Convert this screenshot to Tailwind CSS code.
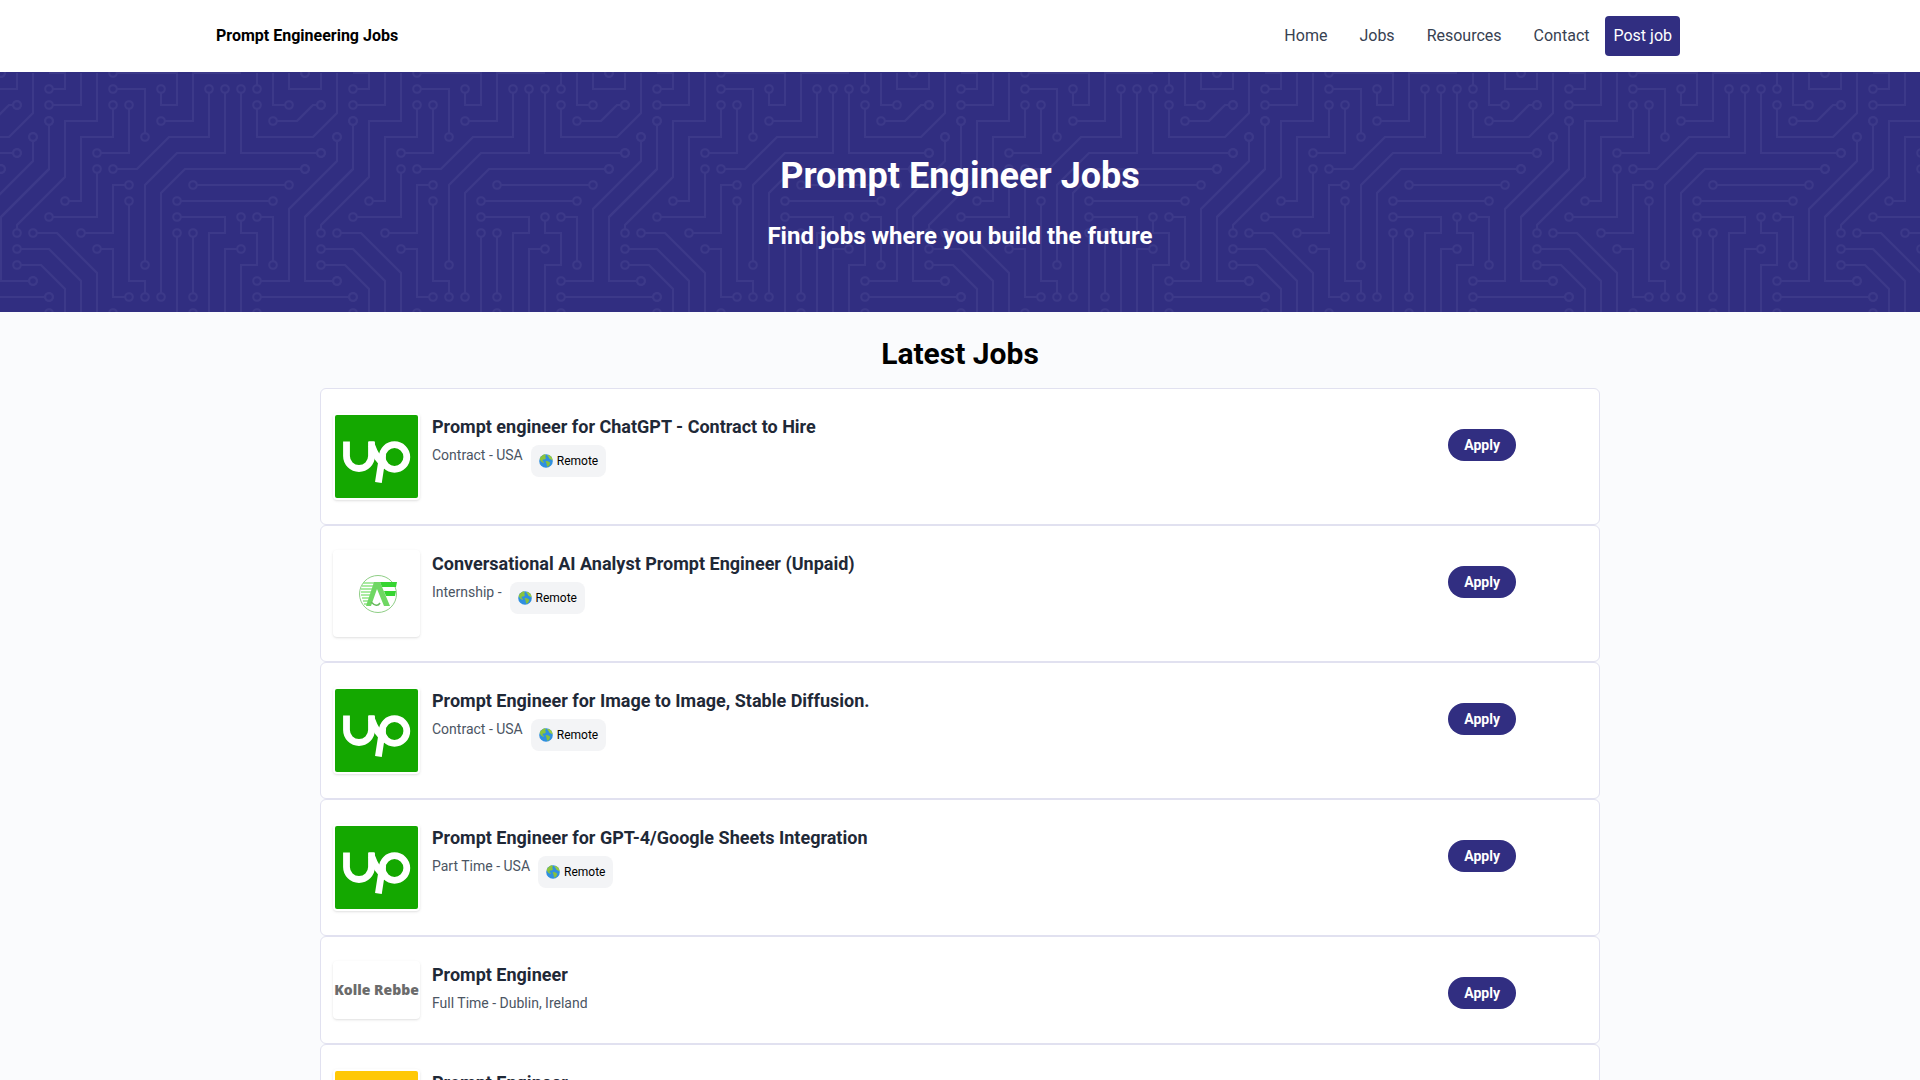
<!DOCTYPE html>
<html lang="en">
<head>
<meta charset="utf-8">
<meta name="viewport" content="width=device-width, initial-scale=1">
<title>Prompt Engineering Jobs</title>
<script src="https://cdn.jsdelivr.net/npm/@tailwindcss/browser@4"></script>
</head>
<body class="bg-[#fafbfd] font-[Roboto,sans-serif] text-black">

<!-- Shared artwork -->
<svg class="absolute size-0" aria-hidden="true">
  <defs>
    <symbol id="globe" viewBox="0 0 14 14">
      <circle cx="7" cy="7" r="6.8" fill="#2f8fe0"/>
      <path d="M0.6 5C1.5 2.6 3.6.8 6 .3L7 1.4 6 3 7.200 4 5.600 5.600 4 5.500 3.400 7 5 8 4.500 9 2 7.500Z" fill="#8bc43c"/>
      <path d="M8 1 10.500 1.300C12.500 2.600 13.600 4.500 13.700 6.500L12 5.500 10.500 4.800 9.500 3Z" fill="#9acb3f"/>
      <path d="M6.500 7 9 7.200 11.300 8.800 10.500 11 8.800 13 7.800 11.500 7.500 9.500Z" fill="#86c03c"/>
    </symbol>
    <symbol id="upwork" viewBox="0 0 83 83">
      <rect width="83" height="83" rx="2" fill="#14a800"/>
      <g fill="none" stroke="#fff" stroke-width="6.800">
        <path d="M11.500 26.500V41a12.500 12.500 0 0 0 25 0V26.500"/>
        <path d="M34 29.900H36.500C39 37 43 46 51 51"/>
        <circle cx="59.500" cy="42" r="12.300"/>
        <path d="M47.800 39 43.400 67.500"/>
      </g>
    </symbol>
    <symbol id="af" viewBox="0 0 83 83">
      <circle cx="43" cy="42" r="18.500" fill="none" stroke="#8fce86" stroke-width="1"/>
      <g fill="none" stroke="#8ee584" stroke-width="1.400">
        <path d="M28 31h13M27 34h12M26 37h12M26 40h11M26 43h10M27 46h8M28 49h7M29 52h6"/>
      </g>
      <path d="M31 54 39 30h6l10 24h-6l-7-17-6 17z" fill="#6fd763"/>
      <path d="M45 30h17l-1 5H47zM49 39h12l-1 5h-9z" fill="#35d530"/>
      <path d="M36 50q6 6 9 1" fill="none" stroke="#66b85c" stroke-width="1.500"/>
    </symbol>
  </defs>
</svg>

<header class="bg-white">
  <div class="mx-auto flex h-[72px] max-w-[1536px] items-center justify-between pr-12 pl-6">
    <a href="#" class="font-bold">Prompt Engineering Jobs</a>
    <nav class="flex items-center text-[#374151]">
      <a href="#" class="px-4">Home</a>
      <a href="#" class="px-4">Jobs</a>
      <a href="#" class="px-4">Resources</a>
      <a href="#" class="px-4">Contact</a>
      <a href="#" class="rounded bg-[#312e81] p-2 text-white">Post job</a>
    </nav>
  </div>
</header>

<section class="relative h-60 overflow-hidden bg-[#312e81] text-center text-white">
  <!-- Circuit board tile, 19 x 19 cells of 16px -->
  <svg class="absolute inset-0 size-full" aria-hidden="true">
    <defs>
      <g id="traces" fill="none">
        <path stroke="#3c3989" stroke-width=".125" d="M3 1H4V0H3M3 2H5V0M6 0V3H4V6.500L1 9.500V10M3 3V6L0 9V13H2M21 4V5.500L18 8.500V13H16M22 3V6L19 9V13H21M7 1H9V4M7 0H11V2H10V1M15 0H12V3H10M7 2V4H5V8H4M8 2V5H6M6 6V9H3M13 1V4H10.500L8.500 6H7M14 1V5H11L9 7V12M15 1V5H20M16 1V0M16 2V4H19.500L21 2.500V0M17 0V2H18M18 0V1H20V0M17 3H18.500L19.500 2H20M19 6H11.500L10 7.500V14M12 7H18M11 8H17M11 9H14V10H13V15M11 10V15M12 10V14M15 9V10H16V12H15V15M16 9H17V12M15 11H14V15M16 14H22M8 7H7V10H5M8 8V13H9V14M6 11H7V14H8M2 10H3.500L6 12.500V15M1 11H3L5 13V15M1 12H2.500L4 13.500V15"/>
        <path stroke="#3c3989" stroke-width=".6" stroke-linecap="round" d="M3 1h0M3 2h0M1 10h0M3 3h0M2 13h0M2 4h0M21 4h0M16 13h0M22 3h0M21 13h0M7 1h0M9 4h0M7 0h0M10 1h0M10 3h0M7 2h0M4 8h0M8 2h0M6 5h0M6 6h0M3 9h0M13 1h0M7 6h0M14 1h0M9 12h0M15 1h0M20 5h0M1 5h0M16 1h0M16 2h0M18 2h0M17 3h0M20 2h0M1 2h0M0 0h0M19 0h0M19 6h0M0 6h0M10 14h0M12 7h0M18 7h0M11 8h0M17 8h0M11 9h0M11 10h0M12 10h0M12 14h0M12 15h0M15 9h0M16 9h0M17 12h0M15 11h0M16 14h0M22 14h0M3 14h0M16 15h0M3 15h0M8 7h0M5 10h0M8 8h0M9 14h0M6 11h0M8 14h0M7 15h0M2 10h0M1 11h0M1 12h0"/>
        <path stroke="#312e81" stroke-width=".35" stroke-linecap="round" d="M3 1h0M3 2h0M1 10h0M3 3h0M2 13h0M2 4h0M21 4h0M16 13h0M22 3h0M21 13h0M7 1h0M9 4h0M7 0h0M10 1h0M10 3h0M7 2h0M4 8h0M8 2h0M6 5h0M6 6h0M3 9h0M13 1h0M7 6h0M14 1h0M9 12h0M15 1h0M20 5h0M1 5h0M16 1h0M16 2h0M18 2h0M17 3h0M20 2h0M1 2h0M0 0h0M19 0h0M19 6h0M0 6h0M10 14h0M12 7h0M18 7h0M11 8h0M17 8h0M11 9h0M11 10h0M12 10h0M12 14h0M12 15h0M15 9h0M16 9h0M17 12h0M15 11h0M16 14h0M22 14h0M3 14h0M16 15h0M3 15h0M8 7h0M5 10h0M8 8h0M9 14h0M6 11h0M8 14h0M7 15h0M2 10h0M1 11h0M1 12h0"/>
      </g>
      <pattern id="circuit" width="304" height="304" patternUnits="userSpaceOnUse">
        <g transform="translate(1 1) scale(16)">
          <use href="#traces" x="-19"/>
          <use href="#traces"/>
          <use href="#traces" x="19"/>
        </g>
      </pattern>
    </defs>
    <rect width="100%" height="100%" fill="url(#circuit)"/>
  </svg>
  <div class="relative flex h-full flex-col items-center justify-center gap-6 pt-6">
    <h1 class="text-4xl font-bold">Prompt Engineer Jobs</h1>
    <h2 class="text-2xl font-bold">Find jobs where you build the future</h2>
  </div>
</section>

<main class="mx-auto max-w-7xl">
  <h2 class="pt-6 pb-4 text-center text-3xl font-bold">Latest Jobs</h2>

  <ul>
    <li class="flex items-start rounded-md border border-[#e1e1f0] bg-white py-6 pr-[83px] pl-3">
      <div class="w-[87px] shrink-0 rounded p-0.5 shadow-sm"><svg class="block size-[83px]" role="img" aria-label="Upwork"><use href="#upwork"/></svg></div>
      <div class="ml-3 grow">
        <h3 class="text-lg leading-7 font-bold text-[#1f2937]">Prompt engineer for ChatGPT - Contract to Hire</h3>
        <div class="flex items-start gap-2 text-sm leading-7 text-[#4b5563]">
          <p>Contract - USA</p>
          <span class="mt-1 flex h-8 items-center gap-1 rounded-lg bg-[#f3f4f6] px-2 text-xs text-black"><svg class="size-3.5" aria-hidden="true"><use href="#globe"/></svg>Remote</span>
        </div>
      </div>
      <button class="mt-4 h-8 rounded-full bg-[#312e81] px-4 text-sm font-bold text-white">Apply</button>
    </li>

    <li class="flex items-start rounded-md border border-[#e1e1f0] bg-white py-6 pr-[83px] pl-3">
      <div class="w-[87px] shrink-0 rounded p-0.5 shadow-sm"><svg class="block size-[83px]" role="img" aria-label="AF"><use href="#af"/></svg></div>
      <div class="ml-3 grow">
        <h3 class="text-lg leading-7 font-bold text-[#1f2937]">Conversational AI Analyst Prompt Engineer (Unpaid)</h3>
        <div class="flex items-start gap-2 text-sm leading-7 text-[#4b5563]">
          <p>Internship -</p>
          <span class="mt-1 flex h-8 items-center gap-1 rounded-lg bg-[#f3f4f6] px-2 text-xs text-black"><svg class="size-3.5" aria-hidden="true"><use href="#globe"/></svg>Remote</span>
        </div>
      </div>
      <button class="mt-4 h-8 rounded-full bg-[#312e81] px-4 text-sm font-bold text-white">Apply</button>
    </li>

    <li class="flex items-start rounded-md border border-[#e1e1f0] bg-white py-6 pr-[83px] pl-3">
      <div class="w-[87px] shrink-0 rounded p-0.5 shadow-sm"><svg class="block size-[83px]" role="img" aria-label="Upwork"><use href="#upwork"/></svg></div>
      <div class="ml-3 grow">
        <h3 class="text-lg leading-7 font-bold text-[#1f2937]">Prompt Engineer for Image to Image, Stable Diffusion.</h3>
        <div class="flex items-start gap-2 text-sm leading-7 text-[#4b5563]">
          <p>Contract - USA</p>
          <span class="mt-1 flex h-8 items-center gap-1 rounded-lg bg-[#f3f4f6] px-2 text-xs text-black"><svg class="size-3.5" aria-hidden="true"><use href="#globe"/></svg>Remote</span>
        </div>
      </div>
      <button class="mt-4 h-8 rounded-full bg-[#312e81] px-4 text-sm font-bold text-white">Apply</button>
    </li>

    <li class="flex items-start rounded-md border border-[#e1e1f0] bg-white py-6 pr-[83px] pl-3">
      <div class="w-[87px] shrink-0 rounded p-0.5 shadow-sm"><svg class="block size-[83px]" role="img" aria-label="Upwork"><use href="#upwork"/></svg></div>
      <div class="ml-3 grow">
        <h3 class="text-lg leading-7 font-bold text-[#1f2937]">Prompt Engineer for GPT-4/Google Sheets Integration</h3>
        <div class="flex items-start gap-2 text-sm leading-7 text-[#4b5563]">
          <p>Part Time - USA</p>
          <span class="mt-1 flex h-8 items-center gap-1 rounded-lg bg-[#f3f4f6] px-2 text-xs text-black"><svg class="size-3.5" aria-hidden="true"><use href="#globe"/></svg>Remote</span>
        </div>
      </div>
      <button class="mt-4 h-8 rounded-full bg-[#312e81] px-4 text-sm font-bold text-white">Apply</button>
    </li>

    <li class="flex items-start rounded-md border border-[#e1e1f0] bg-white py-6 pr-[83px] pl-3">
      <div class="flex h-[58px] w-[87px] shrink-0 items-center justify-center rounded font-['Open_Sans',sans-serif] text-sm font-extrabold whitespace-nowrap text-[#6b6b6b] shadow-sm">Kolle Rebbe</div>
      <div class="ml-3 grow">
        <h3 class="text-lg leading-7 font-bold text-[#1f2937]">Prompt Engineer</h3>
        <p class="text-sm leading-7 text-[#4b5563]">Full Time - Dublin, Ireland</p>
      </div>
      <button class="mt-4 h-8 rounded-full bg-[#312e81] px-4 text-sm font-bold text-white">Apply</button>
    </li>

    <li class="flex items-start rounded-md border border-[#e1e1f0] bg-white py-6 pr-[83px] pl-3">
      <div class="w-[87px] shrink-0 rounded p-0.5 shadow-sm"><div class="h-[83px] rounded-xs bg-[#ffc805]"></div></div>
      <div class="ml-3 grow">
        <h3 class="text-lg leading-7 font-bold text-[#1f2937]">Prompt Engineer</h3>
      </div>
    </li>
  </ul>
</main>
</body>
</html>
